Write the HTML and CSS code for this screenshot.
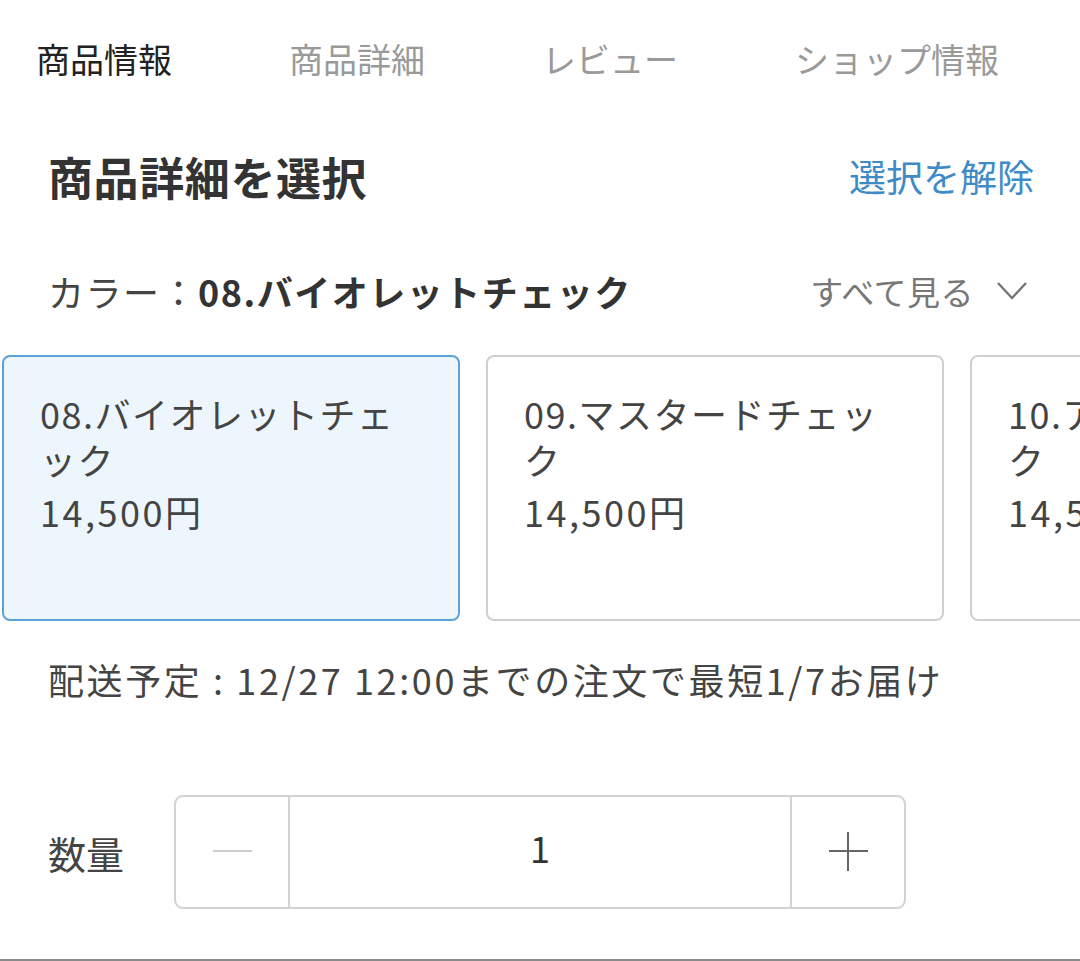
FILE: index.html
```html
<!DOCTYPE html>
<html lang="ja">
<head>
    <meta charset="UTF-8">
    <meta name="viewport" content="width=device-width, initial-scale=1.0">
    <title>商品詳細を選択</title>
    <link rel="stylesheet" href="styles.css">
</head>
<body>
    <nav class="tabs">
        <a class="tab active">商品情報</a>
        <a class="tab">商品詳細</a>
        <a class="tab">レビュー</a>
        <a class="tab">ショップ情報</a>
    </nav>

    <div class="select-head">
        <h2>商品詳細を選択</h2>
        <a class="clear-link">選択を解除</a>
    </div>

    <div class="color-row">
        <div class="color-label">カラー：<strong>08.バイオレットチェック</strong></div>
        <a class="see-all">すべて見る
            <svg class="chevron" width="32" height="20" viewBox="0 0 32 20">
                <polyline points="2,2 16,17 30,2" fill="none" stroke="#777" stroke-width="2.4"/>
            </svg>
        </a>
    </div>

    <div class="variants">
        <div class="variant selected">
            <p class="variant-name">08.バイオレットチェック</p>
            <p class="variant-price">14,500円</p>
        </div>
        <div class="variant">
            <p class="variant-name">09.マスタードチェック</p>
            <p class="variant-price">14,500円</p>
        </div>
        <div class="variant">
            <p class="variant-name">10.アイボリーチェック</p>
            <p class="variant-price">14,500円</p>
        </div>
    </div>

    <p class="delivery">配送予定 : 12/27 12:00までの注文で最短1/7お届け</p>

    <div class="quantity">
        <span class="quantity-label">数量</span>
        <div class="stepper">
            <button class="step minus"><span class="bar"></span></button>
            <div class="count">1</div>
            <button class="step plus"><span class="bar"></span><span class="bar vertical"></span></button>
        </div>
    </div>
</body>
</html>
```

FILE: styles.css
```css
body {
    margin: 0;
    font-family: "Noto Sans CJK JP", "Noto Sans", sans-serif;
    color: #444;
    background-color: #fff;
    overflow: hidden;
    border-bottom: 2px solid #8a8a8a;
}

p, h2 {
    margin: 0;
}

.tabs {
    display: grid;
    grid-template-columns: repeat(4, 253px);
    align-items: center;
    box-sizing: border-box;
    height: 120px;
    padding: 0 0 4px 36px;
    font-size: 34px;
}

.tab {
    color: #9a9a9a;
}

.tab.active {
    color: #222;
}

.select-head {
    display: flex;
    justify-content: space-between;
    align-items: center;
    box-sizing: border-box;
    height: 120px;
    padding: 0 46px 8px 48px;
}

.select-head h2 {
    font-size: 45px;
    font-weight: bold;
    color: #333;
    letter-spacing: 0.6px;
}

.clear-link {
    font-size: 37px;
    color: #3f8bc6;
}

.color-row {
    display: flex;
    justify-content: space-between;
    align-items: center;
    box-sizing: border-box;
    height: 106px;
    padding: 0 52px 4px 48px;
}

.color-label {
    font-size: 36px;
    letter-spacing: 1.5px;
    color: #444;
}

.color-label strong {
    color: #333;
    font-weight: bold;
}

.see-all {
    display: flex;
    align-items: center;
    gap: 22px;
    font-size: 33px;
    letter-spacing: 0.5px;
    color: #777;
}

.variants {
    display: flex;
    gap: 26px;
    padding: 9px 0 0 2px;
}

.variant {
    flex: none;
    box-sizing: border-box;
    width: 458px;
    height: 266px;
    padding: 33px 36px 0 36px;
    border: 2px solid #cfcfcf;
    border-radius: 8px;
    background-color: #fff;
    font-size: 36px;
    line-height: 46px;
    letter-spacing: 1.5px;
    color: #444;
}

.variant.selected {
    border-color: #5da2d6;
    background-color: #eef6fd;
}

.variant-price {
    margin-top: 6px;
    letter-spacing: 2.5px;
}

.delivery {
    margin-top: 34px;
    padding-left: 48px;
    font-size: 36px;
    line-height: 48px;
    letter-spacing: 2.6px;
    color: #444;
}

.quantity {
    display: flex;
    align-items: center;
    gap: 50px;
    margin: 92px 0 50px;
    padding-left: 48px;
}

.quantity-label {
    font-size: 38px;
    color: #444;
}

.stepper {
    display: flex;
    box-sizing: border-box;
    width: 732px;
    height: 114px;
    border: 2px solid #d2d2d2;
    border-radius: 9px;
}

.step {
    position: relative;
    width: 112px;
    border: none;
    background: none;
    padding: 0;
}

.step .bar {
    position: absolute;
    left: 37px;
    top: 53px;
    width: 39px;
    height: 2px;
    background-color: #666;
}

.step.minus .bar {
    background-color: #ccc;
}

.step .bar.vertical {
    left: 55px;
    top: 35px;
    width: 2px;
    height: 39px;
}

.count {
    flex: 1;
    display: flex;
    align-items: center;
    justify-content: center;
    box-sizing: border-box;
    padding-bottom: 10px;
    border-left: 2px solid #d2d2d2;
    border-right: 2px solid #d2d2d2;
    font-size: 36px;
    color: #333;
}
```
